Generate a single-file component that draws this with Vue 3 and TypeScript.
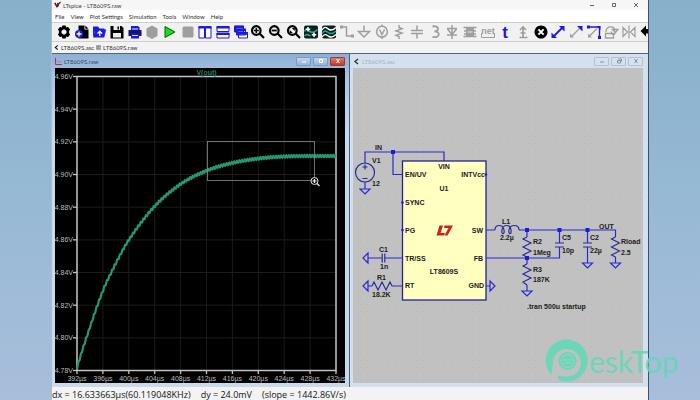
<script setup lang="ts">
interface Shape {
  d: string
  fill?: string
  stroke?: string
  w?: number
}
interface Tool {
  name: string
  shapes: Shape[]
  text?: { value: string; x: number; y: number; size: number; color: string }
}

const BLUE = '#1a1ae0'
const GREY = '#9e9e9e'
const line = (d: string, stroke = GREY, w = 1.5): Shape => ({ d, stroke, w, fill: 'none' })
const solid = (d: string, fill = '#000'): Shape => ({ d, fill })

const lens = 'M2 6.5a4.3 4.3 0 1 0 8.6 0a4.3 4.3 0 1 0 -8.6 0M9.8 9.8L14 14'

const tools: Tool[] = [
  {
    name: 'Settings',
    shapes: [
      {
        d: 'M6.5 1.5h3l.7 1.8 1.9-.4 2 2.6-1 1.5v2l1 1.5-2 2.6-1.9-.4-.7 1.8h-3l-.7-1.8-1.9.4-2-2.6 1-1.5v-2l-1-1.5 2-2.6 1.9.4zM8 5.4a2.6 2.6 0 1 0 .01 0z',
        fill: '#000'
      }
    ]
  },
  {
    name: 'New Schematic',
    shapes: [
      solid('M4.5 1.5h6v4h4v9h-10z'),
      solid('M11.3 1.5l3.2 3.2h-3.2z'),
      solid('M1 10a4 4 0 1 0 8 0a4 4 0 1 0 -8 0', BLUE),
      line('M5 7.6v4.8M2.6 10h4.8', '#fff', 1.3)
    ]
  },
  {
    name: 'Open',
    shapes: [
      solid('M2 2.5h5l1.5 2h5v2h-9.5l-1.5 6h-.5z', BLUE),
      solid('M4.2 5.5h11l-2 8h-11z', BLUE),
      line('M8.8 12v-4.5M6.5 9.5l2.3-2.3 2.3 2.3', '#fff', 1.3)
    ]
  },
  {
    name: 'Save',
    shapes: [
      solid('M1.5 2h11l2 2v10.5h-13z'),
      solid('M4.5 2h6.5v4h-6.5zM4 9h8v4.5h-8z', '#eee'),
      solid('M8.5 2.5h1.5v3h-1.5z')
    ]
  },
  {
    name: 'Print',
    shapes: [
      solid('M4 2h7l1.5 1.5v3h-8.5z', BLUE),
      solid('M1.5 6h13v6h-13z', '#15156e'),
      solid('M4 9.5h8v5h-8z', BLUE),
      line('M5 11.5h6M5 5h6', '#dfe3ff', 1)
    ]
  },
  { name: 'Pause', shapes: [solid('M8 1.5l5.5 3v7.5l-5.5 3-5.5-3v-7.5z', GREY)] },
  { name: 'Run', shapes: [{ d: 'M3 2.5l10 5.5-10 5.5z', fill: '#12e012', stroke: '#075c07', w: 1 }] },
  { name: 'Stop', shapes: [solid('M4 2.5h8q1.5 0 1.5 1.5v8q0 1.5-1.5 1.5h-8q-1.5 0-1.5-1.5v-8q0-1.5 1.5-1.5z', GREY)] },
  {
    name: 'Tile Vertically',
    shapes: [{ d: 'M2 2.5h5.5v11.5h-5.5zM8.5 2.5h5.5v11.5h-5.5z', fill: '#fff', stroke: BLUE, w: 1 }, line('M1.5 3.5h13', BLUE, 2)]
  },
  {
    name: 'Tile Horizontally',
    shapes: [{ d: 'M2 2.5h12v5h-12zM2 9h12v5h-12z', fill: '#fff', stroke: BLUE, w: 1 }, line('M1.5 3.5h13M1.5 10h13', BLUE, 2)]
  },
  {
    name: 'Cascade',
    shapes: [
      { d: 'M1.5 2h9v6h-9zM3.5 5h9v6h-9zM5.5 8.5h9v5.5h-9z', fill: '#fff', stroke: BLUE, w: 1 },
      line('M1 3h10M3 6h10M5 9.5h10', BLUE, 2.4),
      line('M2.5 3v5M4.5 6v5', BLUE, 2)
    ]
  },
  { name: 'Zoom In', shapes: [line(lens, '#000', 2.2), line('M6.3 4v5M3.8 6.5h5', '#000', 1.5)] },
  { name: 'Zoom Out', shapes: [line(lens, '#000', 2.2), line('M3.8 6.5h5', '#000', 1.8)] },
  { name: 'Zoom to Fit', shapes: [line(lens, '#000', 2.2), solid('M5.8 4h3v3zM3.8 6v3h3z')] },
  {
    name: 'Autorange',
    shapes: [
      solid('M3 1.5h10q2 0 2 2v9q0 2-2 2h-10q-2 0-2-2v-9q0-2 2-2z', '#08201f'),
      line('M1.5 7.5c2-4 4-1 5.5 0s4 2 7.5-2M1.5 12c2-3 4-1 6 0', '#25a58e', 1.6),
      line('M5 3v4.5M2.8 5.2h4.5M11 8.5v4.5M8.8 10.8h4.5', '#fff', 1.5)
    ]
  },
  {
    name: 'Waveform',
    shapes: [
      solid('M3 1.5h10q2 0 2 2v9q0 2-2 2h-10q-2 0-2-2v-9q0-2 2-2z', '#08201f'),
      line('M1 6c3-5 5-1.5 7-.5s4 1 7-2', '#fff', 1.4),
      line('M1 9.5c3-4.5 5-1.5 7-.5s4 1 7-2', '#25a58e', 1.5),
      line('M1 13c3-4.5 5-1.5 7-.5s4 1 7-2', '#fff', 1.4)
    ]
  },
  { name: 'Wire', shapes: [line('M1.5 3h6v9h6'), solid('M1 1.5h3v3h-3zM12 10.5h3v3h-3z', GREY)] },
  { name: 'Ground', shapes: [line('M8 1.5v6M2.5 7.5h11l-5.5 5.5z')] },
  { name: 'Voltage', shapes: [line('M8 2.3a5.4 5.4 0 1 0 .01 0M5.5 5.5l2.5 5 2.5-5M8 .5v2M8 13v2')] },
  { name: 'Resistor', shapes: [line('M8 1v2.5l3 1.2-6 2.2 6 2.2-6 2.2 3 1.2v2.5')] },
  { name: 'Capacitor', shapes: [line('M8 1.5v5M8 9.5v5M2 6.5h12M2 9.5h12')] },
  { name: 'Inductor', shapes: [line('M5.5 2.5c7-1.5 7 5 2 5c6-.5 6 7-2 5.5', GREY, 1.8)] },
  { name: 'Diode', shapes: [line('M8 1v14M3 4.5h10M3.5 5l4.5 5.5 4.5-5.5M3 11h10')] },
  {
    name: 'Component',
    shapes: [
      solid('M4 3.5h8v9h-8z', GREY),
      line('M1.5 3.5h13M1.5 12.5h13M2 7h3M11 7h3M2 10h3M11 10h3'),
      line('M5.5 8h5', '#e4e4e4', 1)
    ]
  },
  {
    name: 'Net Name',
    shapes: [line('M1.5 9v4.5h13v-4.5', GREY, 1)],
    text: { value: 'net', x: 8, y: 10, size: 9, color: GREY }
  },
  { name: 'Text', shapes: [], text: { value: 't', x: 8, y: 13.5, size: 17, color: BLUE } },
  { name: 'Directive', shapes: [line('M8 13v-9M5 6l3-3 3 3M5.5 9h5M4.5 13.5h8', GREY, 1.7)] },
  {
    name: 'Delete',
    shapes: [solid('M8 1.5a6.5 6.5 0 1 0 .01 0z'), line('M5.4 5.4l5.2 5.2M10.6 5.4l-5.2 5.2', '#fff', 2)]
  },
  {
    name: 'Move',
    shapes: [line('M3.5 12.5l9-9', BLUE, 1.8), solid('M9 2h5.5v5.5zM1.5 8.500v5.500h5.500z', BLUE)]
  },
  {
    name: 'Drag',
    shapes: [line('M3.5 12.5l9-9', GREY, 1.3), solid('M9 2h5.5v5.5z', BLUE), solid('M2 9.5v4h4z', GREY)]
  },
  {
    name: 'Stretch',
    shapes: [
      line('M2 3h11.5v10.5', BLUE, 1.4),
      line('M3 12.5l8-8', GREY, 1.3),
      solid('M1 1.5h3v3h-3zM12 12h3v3h-3zM10.5 2h4v4z', BLUE),
      solid('M2 9.5v4h4z', GREY)
    ]
  },
  { name: 'Rotate', shapes: [line('M3 8c0-6 8-7 9-1.5M9.5 5.5h5.5l-2.5 3zM2.5 9.5h8v4.5h-8zM8.5 7.5c0 4 3 4 4 1', GREY, 1.3)] },
  { name: 'Mirror', shapes: [line('M2 3.5l4.5 4.5-4.5 4.5zM14 3.5l-4.5 4.5 4.5 4.5zM8 1.5v13', GREY, 1.2)] },
  { name: 'Undo', shapes: [solid('M1.5 7l5.500-5.500v3.500h7v4.500h-7v3z')] }
]

const menus = ['File', 'View', 'Plot Settings', 'Simulation', 'Tools', 'Window', 'Help']

// Plot geometry, in the units of the plot's viewBox
const plot = { left: 77, right: 336, top: 76.5, bottom: 370.5 }
const yTicks = Array.from({ length: 10 }, (_, i) => ({
  label: (4.96 - i * 0.02).toFixed(2) + 'V',
  y: plot.top + ((plot.bottom - plot.top) * i) / 9
}))
const xTicks = Array.from({ length: 11 }, (_, i) => ({
  label: `${392 + i * 4}µs`,
  x: plot.left + ((plot.right - plot.left) * i) / 10
}))

const samples: [number, number][] = [
  [70, 398], [77, 368], [89, 330], [102, 293], [111.5, 272], [128.5, 240.5], [154, 207], [180, 184.5],
  [206.5, 170.7], [232, 163], [259, 158.5], [284, 156.5], [310, 156], [336, 156], [350, 156]
]

function voltageAt(x: number): number {
  let i = 1
  while (i < samples.length - 3 && samples[i + 1][0] < x) i++
  const [x0, y0] = samples[i - 1]
  const [x1, y1] = samples[i]
  const [x2, y2] = samples[i + 1]
  const [x3, y3] = samples[i + 2]
  const h = x2 - x1
  const t = (x - x1) / h
  const m1 = ((y2 - y0) / (x2 - x0)) * h
  const m2 = ((y3 - y1) / (x3 - x1)) * h
  return (
    (2 * t ** 3 - 3 * t ** 2 + 1) * y1 + (t ** 3 - 2 * t ** 2 + t) * m1 +
    (3 * t ** 2 - 2 * t ** 3) * y2 + (t ** 3 - t ** 2) * m2
  )
}

// Startup curve with the converter's switching ripple on top
const trace = Array.from({ length: 200 }, (_, i) => {
  const x = plot.left + i * 1.3
  return `${x.toFixed(1)},${(voltageAt(x) + (i % 2 ? -1.2 : 1.2)).toFixed(1)}`
}).join(' ')

interface Label { t: string; x: number; y: number; a?: 'start' | 'middle' | 'end' }
const labels: Label[] = [
  { t: 'IN', x: 375, y: 150 },
  { t: 'V1', x: 372, y: 163 },
  { t: '12', x: 372, y: 186 },
  { t: 'VIN', x: 444, y: 169, a: 'middle' },
  { t: 'EN/UV', x: 405, y: 177 },
  { t: 'INTVcc', x: 485, y: 177, a: 'end' },
  { t: 'U1', x: 444, y: 191, a: 'middle' },
  { t: 'SYNC', x: 405, y: 205 },
  { t: 'PG', x: 405, y: 233 },
  { t: 'SW', x: 483, y: 233, a: 'end' },
  { t: 'TR/SS', x: 405, y: 261 },
  { t: 'FB', x: 483, y: 261, a: 'end' },
  { t: 'LT8609S', x: 444, y: 274, a: 'middle' },
  { t: 'RT', x: 405, y: 288 },
  { t: 'GND', x: 484, y: 288, a: 'end' },
  { t: 'C1', x: 379, y: 252 },
  { t: '1n', x: 380, y: 269 },
  { t: 'R1', x: 377, y: 280 },
  { t: '18.2K', x: 372, y: 297 },
  { t: 'L1', x: 502, y: 224 },
  { t: '2.2µ', x: 500, y: 240 },
  { t: 'R2', x: 533, y: 244 },
  { t: '1Meg', x: 533, y: 255 },
  { t: 'R3', x: 533, y: 272 },
  { t: '187K', x: 533, y: 282 },
  { t: 'C5', x: 562, y: 240 },
  { t: '10p', x: 562, y: 253 },
  { t: 'C2', x: 590, y: 240 },
  { t: '22µ', x: 590, y: 253 },
  { t: 'OUT', x: 599, y: 229 },
  { t: 'Rload', x: 621, y: 244 },
  { t: '2.5', x: 621, y: 255 },
  { t: '.tran 500u startup', x: 527, y: 309 }
]
const junctions: [number, number][] = [[393, 152], [527, 230], [559.5, 230], [587.5, 230], [527, 258]]
const pins: [number, number][] = [[402.5, 202.5], [402.5, 230], [486, 174.5]]
</script>

<template>
  <div class="desktop">
    <main class="app">
      <header class="titlebar">
        <svg class="app-icon" viewBox="0 0 8 8" aria-hidden="true">
          <path d="M0 2l2-1 1 3 1-3 1 1 2-2 1 1-2 2-1 3-2 1-1-2z" fill="#6b1526" />
        </svg>
        <h1>LTspice - LT8609S.raw</h1>
        <div class="caption">
          <button aria-label="Minimize"><svg viewBox="0 0 6 6"><path d="M1 3.5h4" /></svg></button>
          <button aria-label="Maximize"><svg viewBox="0 0 6 6"><path d="M1.5 1.5h3v3h-3z" /></svg></button>
          <button aria-label="Close"><svg viewBox="0 0 6 6"><path d="M1 1l4 4M5 1l-4 4" /></svg></button>
        </div>
      </header>

      <nav class="menu">
        <button v-for="m in menus" :key="m">{{ m }}</button>
      </nav>

      <div class="toolbar" role="toolbar">
        <button v-for="tool in tools" :key="tool.name" :aria-label="tool.name">
          <svg viewBox="0 0 16 16">
            <path
              v-for="(s, i) in tool.shapes" :key="i" :d="s.d" :fill="s.fill ?? 'none'"
              :stroke="s.stroke ?? 'none'" :stroke-width="s.w ?? 0" fill-rule="evenodd"
            />
            <text
              v-if="tool.text" :x="tool.text.x" :y="tool.text.y" :font-size="tool.text.size"
              :fill="tool.text.color" text-anchor="middle"
            >{{ tool.text.value }}</text>
          </svg>
        </button>
      </div>

      <div class="tabs">
        <button>
          <svg viewBox="0 0 6 6"><path d="M4.5 .5l-3 2.5 3 2.5" fill="none" stroke="#111" stroke-width="1.3" /></svg>
          LT8609S.asc
        </button>
        <button>
          <svg viewBox="0 0 6 6"><path d="M.5 .5h5v5h-5zM.5 2h5M.5 4h5M2.5 .5v5" fill="#bbb" stroke="#777" stroke-width=".6" /></svg>
          LT8609S.raw
        </button>
      </div>

      <div class="mdi">
        <section class="child active">
          <header>
            <svg class="doc-icon" viewBox="0 0 7 7"><path d="M.5 0v6.5h6.5" fill="none" stroke="#a33a48" /><path d="M1 4.5l2-2 1.5 2 2-1" fill="none" stroke="#c66" stroke-width=".8" /></svg>
            <h2>LT8609S.raw</h2>
            <div class="controls">
              <button aria-label="Minimize"><svg viewBox="0 0 8 6"><path d="M2 4h4" /></svg></button>
              <button aria-label="Maximize"><svg viewBox="0 0 8 6"><path d="M2.5 1.5h3v3h-3z" /></svg></button>
              <button aria-label="Close" class="close"><svg viewBox="0 0 8 6"><path d="M2.5 1l3 4M5.5 1l-3 4" /></svg></button>
            </div>
          </header>
          <svg class="client plot" viewBox="55 68 290 315" role="img" aria-label="V(out) waveform">
            <g stroke="#1a1c1c" stroke-width="1">
              <line v-for="t in xTicks" :key="t.label" :x1="t.x" :x2="t.x" :y1="plot.top" :y2="plot.bottom" />
              <line v-for="t in yTicks" :key="t.label" :x1="plot.left" :x2="plot.right" :y1="t.y" :y2="t.y" />
            </g>
            <rect :x="plot.left" :y="plot.top" :width="plot.right - plot.left" :height="plot.bottom - plot.top" fill="none" stroke="#c3c3c3" stroke-width="1.5" />
            <g stroke="#c3c3c3" stroke-width="1.3">
              <line v-for="t in xTicks" :key="t.label" :x1="t.x" :x2="t.x" :y1="plot.bottom" y2="374" />
              <line v-for="t in yTicks" :key="t.label" x1="73" :x2="plot.left" :y1="t.y" :y2="t.y" />
            </g>
            <g class="axis">
              <text v-for="t in yTicks" :key="t.label" x="73" :y="t.y + 2.5" text-anchor="end">{{ t.label }}</text>
              <text v-for="t in xTicks" :key="t.label" :x="t.x" y="381" text-anchor="middle">{{ t.label }}</text>
            </g>
            <text class="signal" x="206.5" y="74.5" text-anchor="middle">V(out)</text>
            <polyline :points="trace" fill="none" stroke="#27976e" stroke-width="2.2" stroke-linejoin="round" />
            <rect x="207.5" y="141.5" width="107" height="39" fill="none" stroke="#8c8c8c" stroke-width=".8" />
            <circle cx="314.5" cy="181" r="3.5" fill="#111" stroke="#ddd" />
            <path d="M314.5 179v4M312.5 181h4M317 183.5l2.5 2.5" stroke="#eee" stroke-width="1.2" />
          </svg>
        </section>

        <section class="child">
          <header>
            <svg class="doc-icon" viewBox="0 0 7 7"><path d="M5 1l-3 2.5 3 2.5" fill="none" stroke="#333" stroke-width="1.3" /></svg>
            <h2>LT8609S.asc</h2>
            <div class="controls">
              <button aria-label="Minimize"><svg viewBox="0 0 8 6"><path d="M2 4h4" /></svg></button>
              <button aria-label="Restore"><svg viewBox="0 0 8 6"><path d="M2.5 2.5h3v2.5h-3zM3.5 1h3v2.5" /></svg></button>
              <button aria-label="Close"><svg viewBox="0 0 8 6"><path d="M2.5 1l3 4M5.5 1l-3 4" /></svg></button>
            </div>
          </header>
          <svg class="client schematic" viewBox="353 68 290 315" role="img" aria-label="LT8609S circuit">
            <defs>
              <pattern id="dots" width="7" height="7" patternUnits="userSpaceOnUse">
                <rect x="3" y="3" width="1" height="1" fill="#b8b8b8" />
              </pattern>
            </defs>
            <rect x="353" y="68" width="290" height="315" fill="url(#dots)" />
            <rect x="402.5" y="161" width="83.5" height="139" fill="#ffffc0" stroke="#23238f" stroke-width="1.3" />
            <g class="wire">
              <path d="M365 163v-11h79v9M393 152v22.5h9M365 182v7" />
              <path d="M368 258h14M385 258h17M368 286h4M392 286h10" />
              <path d="M486 230h9M519 230h96.5v7M486 258h73.5v-11M527 230v7M527 257v7M527 285v6M559.5 230v13M587.5 230v13M587.5 247v16M615.5 257v6M486 286h4" />
              <path d="M360 189h10l-5 5zM368 253v10l-5-5zM368 281v10l-5-5zM490 281v10l5-5zM522 291h10l-5 5zM582.5 263h10l-5 5zM610.5 263h10l-5 5z" />
            </g>
            <g class="part">
              <circle cx="365" cy="172.5" r="9.5" />
              <path d="M362.5 167h5M365 164.5v5M362.5 178.5h5" />
              <path d="M382.2 253.5v9M384.8 253.5v9" />
              <path d="M372 286l2-4 4 8 4-8 4 8 4-8 2 4" />
              <path d="M495 230c0-6 8-6 9 0c1 5-3 5-2 0c1-6 8-6 9 0c1 5-3 5-2 0c1-6 10-6 10 0" />
              <path d="M527 237l-4 2 8 4-8 4 8 4-8 4 4 2M527 264l-4 2 8 4-8 4 8 4-8 4 4 3M615.5 237l-4 2 8 4-8 4 8 4-8 4 4 2" />
              <path d="M555 243h9M555 247h9M583 243h9M583 247h9" />
            </g>
            <rect v-for="([x, y], i) in junctions" :key="i" class="node" :x="x - 2" :y="y - 2" width="4" height="4" />
            <circle v-for="([x, y], i) in pins" :key="i" class="node" :cx="x" :cy="y" r="1.3" />
            <g fill="#d2201c">
              <path d="M439.5 225.5h3.5l-2.5 7.5h4.5l-1 2.5h-7.500z" />
              <path d="M444.500 225.5h8.500l-5.5 10h-3l4-7.500h-4.500z" />
            </g>
            <text v-for="l in labels" :key="l.t" :x="l.x" :y="l.y" :text-anchor="l.a ?? 'start'">{{ l.t }}</text>
          </svg>
        </section>
      </div>

      <footer class="status">
        <span>dx = 16.633663µs(60.119048KHz)</span>
        <span>dy = 24.0mV</span>
        <span>(slope = 1442.86V/s)</span>
      </footer>
    </main>

    <svg class="watermark" viewBox="0 0 140 44" aria-label="DeskTop">
      <path d="M5.500 36A21 21 0 1 1 21 42.500q-7 0-9-3v-3q15 3 20-4A14 14 0 1 0 7 22z" />
      <circle cx="21.5" cy="22" r="9" />
      <path d="M15 22a6.500 6.500 0 0 1 13 0a6.500 6.500 0 0 1 -13 0M17 21h9M17 24h9" fill="none" stroke="#a3d8c9" stroke-width=".8" />
      <text x="43" y="34">eskTop</text>
    </svg>
  </div>
</template>

<style>
body {
  margin: 0;
}
</style>

<style scoped>
* {
  box-sizing: border-box;
}
.desktop {
  position: relative;
  height: 100vh;
  padding: 0 51px;
  overflow: hidden;
  background: linear-gradient(#86b0cb, #97b9d4 50%, #a8bedb);
  font-family: "Lato", "Liberation Sans", sans-serif;
}
.app {
  display: flex;
  flex-direction: column;
  height: 100%;
  overflow: hidden;
  background: #f3f3f3;
  border: solid #a9bccb;
  border-width: 0 1px;
  border-right-color: #3d5166;
}
button {
  margin: 0;
  padding: 0;
  border: 0;
  background: none;
  font: inherit;
  color: inherit;
}
h1,
h2 {
  flex: 1;
  margin: 0;
  font-size: 6px;
  font-weight: 400;
}
.titlebar {
  display: flex;
  align-items: center;
  gap: 2px;
  height: 10px;
  padding-left: 2px;
  background: #f6f6f6;
  color: #444;
}
.app-icon {
  width: 7px;
  height: 8px;
}
.caption {
  display: flex;
  gap: 16px;
  padding-right: 9px;
}
.caption button,
.caption svg {
  display: block;
  width: 6px;
  height: 6px;
}
.caption path {
  fill: none;
  stroke: #444;
  stroke-width: 0.8;
}
.menu {
  display: flex;
  align-items: center;
  gap: 6px;
  height: 12px;
  padding-left: 3px;
  background: #fff;
  color: #333;
  font-size: 6px;
}
.toolbar {
  display: flex;
  align-items: center;
  justify-content: space-between;
  height: 20px;
  padding-left: 4px;
  margin-right: -7px;
  background: #f1f1f1;
  border: solid #cfcfcf;
  border-width: 1px 0;
}
.toolbar button,
.toolbar svg {
  display: block;
  width: 16px;
  height: 16px;
}
.toolbar text {
  font-family: "Liberation Sans", sans-serif;
  font-weight: 700;
}
.tabs {
  display: flex;
  align-items: center;
  gap: 2px;
  height: 11px;
  padding-left: 2px;
  color: #333;
  font-size: 6px;
}
.tabs button {
  display: flex;
  align-items: center;
  gap: 2px;
}
.tabs svg {
  width: 5px;
  height: 5px;
}
.mdi {
  flex: 1;
  display: grid;
  grid-template-columns: 1fr 1fr;
  min-height: 0;
  border-top: 1px solid #53677c;
  background: #b9cfe6;
}
.child {
  display: flex;
  flex-direction: column;
  min-width: 0;
  min-height: 0;
  padding: 0 5px 4px 3px;
  background: #d3e0ee;
}
.child.active {
  background: linear-gradient(#8eb0d6, #a9c6e4 25px, #c9daeb 80px);
  border-right: 1px solid #44607c;
  padding-right: 4px;
}
.child header {
  display: flex;
  align-items: center;
  gap: 2px;
  height: 14px;
  color: #a5b4c4;
}
.child.active header {
  color: #38485a;
}
.doc-icon {
  width: 7px;
  height: 7px;
}
.controls {
  display: flex;
  gap: 2px;
}
.controls button {
  display: flex;
  align-items: center;
  justify-content: center;
  width: 15px;
  height: 9px;
  border: 1px solid #b3c2d3;
  border-radius: 1px;
  background: #d6e1ee;
}
.active .controls button {
  border-color: #7d99b9;
  background: linear-gradient(#c3d5e9, #98b4d2);
}
.active .controls .close {
  border-color: #8e4138;
  background: linear-gradient(#dd7b68, #c33a25);
}
.controls svg {
  width: 8px;
  height: 6px;
}
.controls path {
  fill: none;
  stroke: #8493a5;
  stroke-width: 1;
}
.active .controls path {
  stroke: #fff;
}
.client {
  display: block;
  flex: 1;
  width: 100%;
  min-height: 0;
}
.plot {
  background: #000;
}
.schematic {
  background: #c1c1c1;
}
.axis text,
.signal {
  font: 7px "Liberation Sans", sans-serif;
  fill: #bdbdbd;
}
.signal {
  font-weight: 700;
  fill: #20805c;
}
.schematic text {
  font: 700 7px "Liberation Sans", sans-serif;
  fill: #202020;
}
.wire path {
  fill: none;
  stroke: #2828d4;
  stroke-width: 1.2;
}
.part path,
.part circle {
  fill: none;
  stroke: #2b2b9c;
  stroke-width: 1.2;
}
.node {
  fill: #1c1cd8;
}
.status {
  display: flex;
  align-items: center;
  gap: 10px;
  height: 13px;
  padding-top: 2px;
  background: #f3f3f3;
  color: #151515;
  font: 9px "Open Sans", sans-serif;
  white-space: pre;
}
.watermark {
  position: absolute;
  right: 14px;
  bottom: 17px;
  width: 140px;
  height: 44px;
  fill: #62d9b8;
  opacity: 0.9;
}
.watermark text {
  font: 30px "Lato", sans-serif;
}
</style>
